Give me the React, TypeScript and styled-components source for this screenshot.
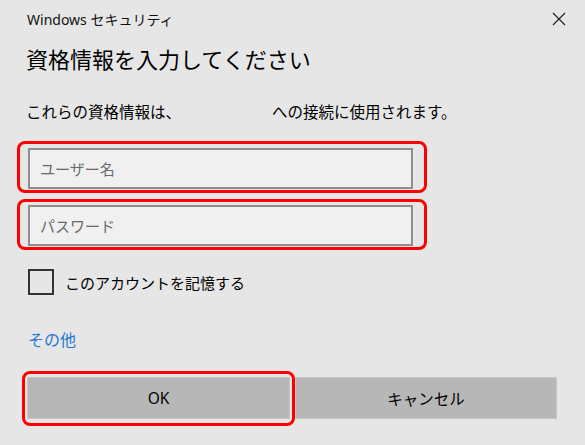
import React from 'react';
import styled, { createGlobalStyle } from 'styled-components';

const GlobalStyle = createGlobalStyle`
  html, body {
    margin: 0;
    padding: 0;
    background: #e6e6e6;
  }
  body {
    font-family: "Noto Sans", "Noto Sans CJK JP", sans-serif;
    color: #000;
  }
`;

const Dialog = styled.div`
  width: 585px;
  height: 445px;
  background: #e6e6e6;
  overflow: hidden;
`;

const TitleBar = styled.div`
  height: 38px;
  display: flex;
  align-items: center;
  justify-content: space-between;
  padding: 0 19px 0 27px;
`;

const TitleText = styled.span`
  font-size: 14px;
  color: #111;
`;

const CloseButton = styled.button`
  width: 14px;
  height: 14px;
  padding: 0;
  display: flex;
  align-items: center;
  justify-content: center;
  background: none;
  border: none;
`;

const Body = styled.div`
  padding: 0 28px;
  display: flex;
  flex-direction: column;
  align-items: flex-start;
`;

const Heading = styled.h1`
  margin: 7px 0 0 -2px;
  font-size: 22px;
  line-height: 28px;
  font-weight: 400;
`;

const Description = styled.p`
  margin: 28px 0 0 -2px;
  font-size: 15.5px;
  line-height: 22px;
`;

const Hidden = styled.span`
  display: inline-block;
  width: 91px;
`;

const FieldStack = styled.div`
  margin: 18px 0 0 -11px;
  display: flex;
  flex-direction: column;
  gap: 6px;
`;

const Highlight = styled.div<{ $pad: string }>`
  border: 3px solid #ff0000;
  border-radius: 8px;
  padding: ${(p) => p.$pad};
`;

const TextInput = styled.input`
  display: block;
  box-sizing: border-box;
  width: 385px;
  height: 41px;
  padding: 0 10px;
  background: #f0f0f0;
  border: 2px solid #8e8e8e;
  font-family: inherit;
  font-size: 15px;
  color: #000;
  outline: none;
  &::placeholder {
    color: #6a6a6a;
  }
`;

const CheckRow = styled.label`
  margin-top: 19px;
  display: flex;
  align-items: center;
  gap: 11px;
  font-size: 15px;
`;

const CheckBox = styled.span`
  box-sizing: border-box;
  width: 26px;
  height: 26px;
  border: 2px solid #333;
`;

const MoreLink = styled.a`
  margin-top: 34px;
  font-size: 16px;
  line-height: 22px;
  color: #1f7ad3;
  text-decoration: none;
`;

const ButtonRow = styled.div`
  margin: 20px 0 0 -6px;
  display: flex;
  align-items: flex-start;
`;

const DialogButton = styled.button<{ $offset?: number }>`
  box-sizing: border-box;
  width: ${(p) => (p.$offset ? 262 : 263)}px;
  height: 42px;
  margin-top: ${(p) => p.$offset ?? 0}px;
  background: #b7b7b7;
  border: 1px solid #c6c6c6;
  font-family: inherit;
  font-size: 15.5px;
  color: #000;
  display: flex;
  align-items: center;
  justify-content: center;
`;

const CloseIcon = () => (
  <svg width="14" height="14" viewBox="0 0 14 14">
    <path d="M1 1 L13 13 M13 1 L1 13" stroke="#222" strokeWidth="1.2" fill="none" />
  </svg>
);

export default function App() {
  return (
    <Dialog>
      <GlobalStyle />
      <TitleBar>
        <TitleText>Windows セキュリティ</TitleText>
        <CloseButton aria-label="閉じる">
          <CloseIcon />
        </CloseButton>
      </TitleBar>
      <Body>
        <Heading>資格情報を入力してください</Heading>
        <Description>
          これらの資格情報は、<Hidden />への接続に使用されます。
        </Description>
        <FieldStack>
          <Highlight $pad="4px 11px 1px 8px">
            <TextInput placeholder="ユーザー名" />
          </Highlight>
          <Highlight $pad="3px 11px 1px 8px">
            <TextInput type="password" placeholder="パスワード" />
          </Highlight>
        </FieldStack>
        <CheckRow>
          <CheckBox />
          このアカウントを記憶する
        </CheckRow>
        <MoreLink href="#">その他</MoreLink>
        <ButtonRow>
          <Highlight $pad="3px 2px 4px 2px">
            <DialogButton>OK</DialogButton>
          </Highlight>
          <DialogButton $offset={6}>キャンセル</DialogButton>
        </ButtonRow>
      </Body>
    </Dialog>
  );
}
